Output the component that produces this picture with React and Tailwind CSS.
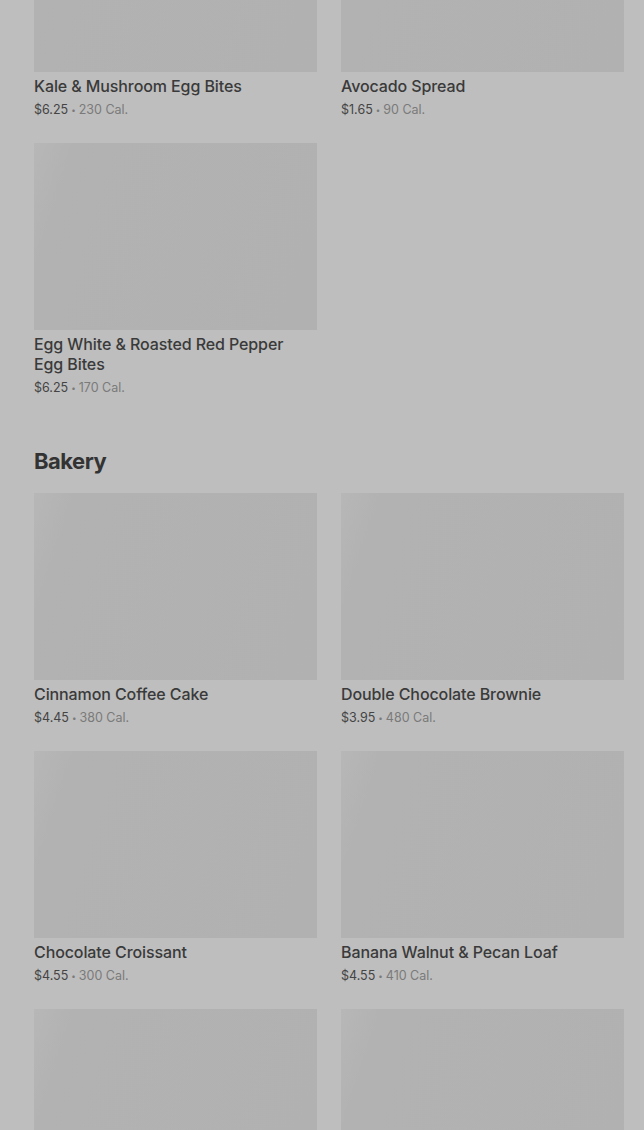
const breakfast = [
  { name: 'Kale & Mushroom Egg Bites', price: '$6.25', cal: '230 Cal.' },
  { name: 'Avocado Spread', price: '$1.65', cal: '90 Cal.' },
  { name: 'Egg White & Roasted Red Pepper Egg Bites', price: '$6.25', cal: '170 Cal.' },
];

const bakery = [
  { name: 'Cinnamon Coffee Cake', price: '$4.45', cal: '380 Cal.' },
  { name: 'Double Chocolate Brownie', price: '$3.95', cal: '480 Cal.' },
  { name: 'Chocolate Croissant', price: '$4.55', cal: '300 Cal.' },
  { name: 'Banana Walnut & Pecan Loaf', price: '$4.55', cal: '410 Cal.' },
];

export default function App() {
  return (
    <div className="h-[1130px] overflow-hidden bg-[#bebebe] pl-[34px] pr-[20px] font-['Inter','Liberation_Sans',sans-serif]">
      <div className="mt-[-115px]">
        <Grid items={breakfast} />
      </div>

      <h2 className="mt-[50px] text-[22px] leading-[28px] font-bold tracking-[-0.5px] text-[#333]">
        Bakery
      </h2>
      <div className="mt-[18px]">
        <Grid items={bakery} loading={2} />
      </div>
    </div>
  );
}

function Grid({ items, loading = 0 }) {
  return (
    <div className="grid grid-cols-2 gap-x-[24px] gap-y-[24px]">
      {items.map((item) => (
        <Item key={item.name} {...item} />
      ))}
      {Array.from({ length: loading }).map((_, i) => (
        <Thumb key={i} />
      ))}
    </div>
  );
}

function Thumb() {
  return <div className="h-[187px] bg-[linear-gradient(108deg,#b7b7b7_0%,#b2b2b2_12%,#b1b1b1_100%)]" />;
}

function Item({ name, price, cal }) {
  return (
    <div>
      <Thumb />
      <p className="mt-1 pr-4 text-[16px] leading-5 font-medium tracking-[-0.1px] text-[#3a3a3a]">{name}</p>
      <p className="mt-[5px] flex items-center gap-[3px] text-[12.5px] leading-[18px] text-[#7a7a7a]">
        <span className="text-[#444]">{price}</span>
        <span className="text-[8px]">•</span>
        <span>{cal}</span>
      </p>
    </div>
  );
}
